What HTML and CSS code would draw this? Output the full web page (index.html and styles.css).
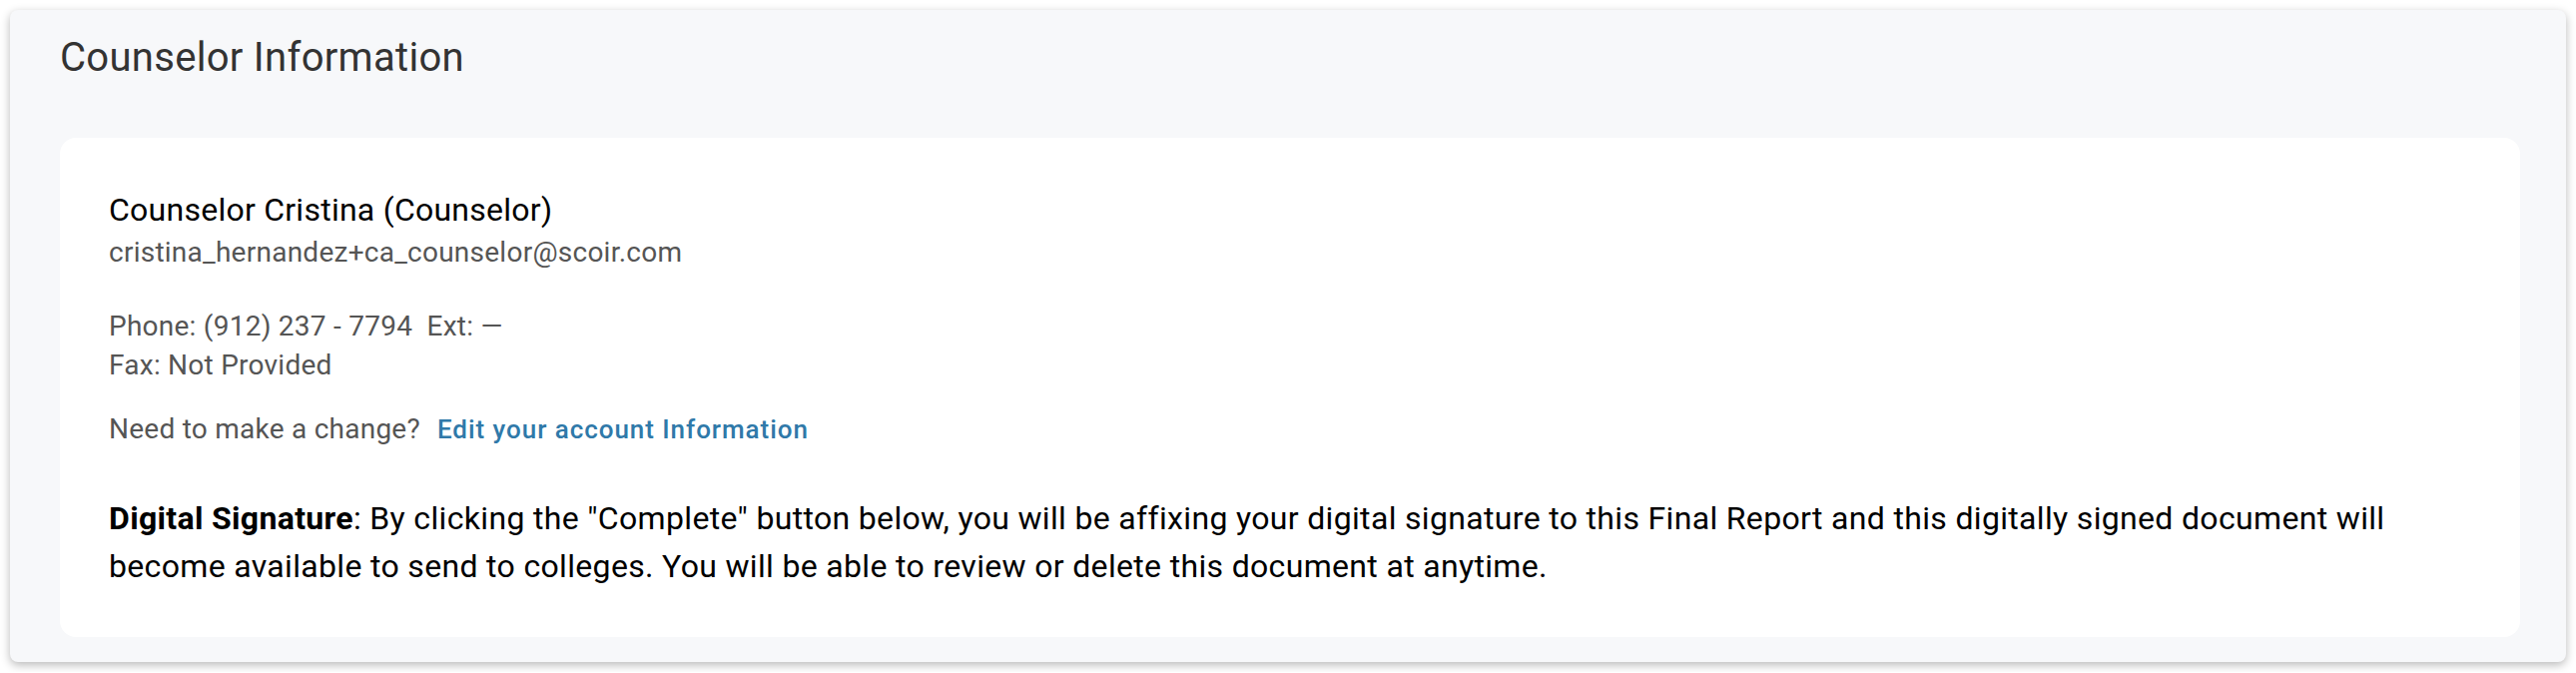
FILE: index.html
```html
<!DOCTYPE html>
<html lang="en">
<head>
<meta charset="utf-8">
<title>Counselor Information</title>
<link rel="stylesheet" href="styles.css">
</head>
<body>
<section class="panel">
  <h2 class="panel-title">Counselor Information</h2>
  <div class="card">
    <div class="name">Counselor Cristina (Counselor)</div>
    <div class="email">cristina_hernandez+ca_counselor@scoir.com</div>
    <div class="contact">
      <div class="line">Phone: (912) 237 - 7794&nbsp; Ext: —</div>
      <div class="line">Fax: Not Provided</div>
    </div>
    <div class="change">
      <span>Need to make a change?</span>
      <a class="edit-link" href="#">Edit your account Information</a>
    </div>
    <p class="signature"><strong>Digital Signature</strong>: By clicking the "Complete" button below, you will be affixing your digital signature to this Final Report and this digitally signed document will become available to send to colleges. You will be able to review or delete this document at anytime.</p>
  </div>
</section>
</body>
</html>
```
FILE: styles.css
```css
html, body {
  margin: 0;
  padding: 0;
  background: #ffffff;
}
body {
  padding: 10px;
  font-family: Roboto, "Liberation Sans", Arial, sans-serif;
}
.panel {
  background: #f7f8fa;
  border-radius: 8px;
  box-shadow: 0 3px 10px rgba(0, 0, 0, 0.28);
  padding: 24px 46px 26px 50px;
  height: 653px;
  box-sizing: border-box;
}
.panel-title {
  margin: 0 0 57px 0;
  font-size: 40px;
  font-weight: 400;
  line-height: 47px;
  letter-spacing: 0.3px;
  color: #333333;
}
.card {
  background: #ffffff;
  border-radius: 16px;
  padding: 54px 49px 47px 49px;
}
.name {
  font-size: 32px;
  line-height: 36px;
  letter-spacing: 0.25px;
  color: #000000;
}
.email {
  margin-top: 9px;
  font-size: 28px;
  line-height: 32px;
  letter-spacing: 0.25px;
  color: #555555;
}
.contact {
  margin-top: 38px;
  font-size: 28px;
  line-height: 39px;
  letter-spacing: 0.25px;
  color: #555555;
}
.change {
  margin-top: 25px;
  display: flex;
  align-items: baseline;
  gap: 17px;
  font-size: 28px;
  line-height: 39px;
  letter-spacing: 0.25px;
  color: #555555;
}
.edit-link {
  color: #2f79a9;
  font-size: 26px;
  font-weight: 500;
  letter-spacing: 0.95px;
  text-decoration: none;
}
.signature {
  margin: 45px 60px 0 0;
  font-size: 32px;
  line-height: 48px;
  letter-spacing: 0.33px;
  color: #000000;
}
.signature strong {
  font-weight: 700;
}
```
